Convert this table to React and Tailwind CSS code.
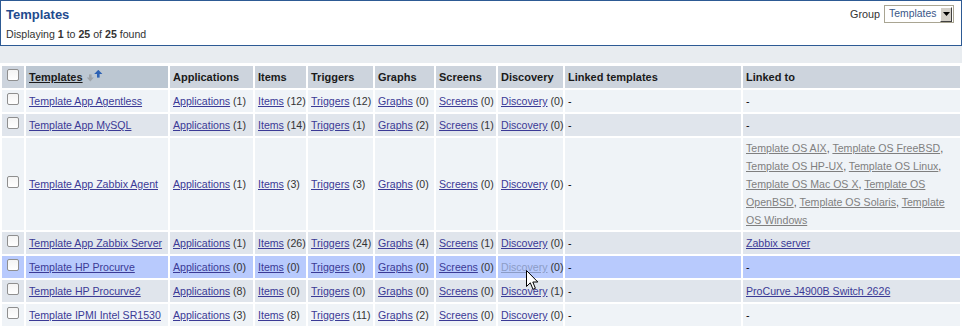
import React from "react";

const rows = [
  { name: "Template App Agentless", apps: 1, items: 12, triggers: 12, graphs: 0, screens: 0, disc: 0, linkedTo: null },
  { name: "Template App MySQL", apps: 1, items: 14, triggers: 1, graphs: 2, screens: 1, disc: 0, linkedTo: null },
  { name: "Template App Zabbix Agent", apps: 1, items: 3, triggers: 3, graphs: 0, screens: 0, disc: 0, linkedTo: "os" },
  { name: "Template App Zabbix Server", apps: 1, items: 26, triggers: 24, graphs: 4, screens: 1, disc: 0, linkedTo: "Zabbix server" },
  { name: "Template HP Procurve", apps: 0, items: 0, triggers: 0, graphs: 0, screens: 0, disc: 0, linkedTo: null, hover: true },
  { name: "Template HP Procurve2", apps: 8, items: 0, triggers: 0, graphs: 0, screens: 0, disc: 1, linkedTo: "ProCurve J4900B Switch 2626" },
  { name: "Template IPMI Intel SR1530", apps: 3, items: 8, triggers: 11, graphs: 2, screens: 0, disc: 0, linkedTo: null },
];

const Checkbox = () => (
  <div className="mb-[5px] ml-[5px] h-[12px] w-[12px] rounded-[2px] border border-[#8f8f8f] bg-gradient-to-b from-[#f4f4f4] to-white" />
);

const Link = ({ children, muted }) => (
  <a href="#" className={`underline ${muted ? "text-[#7f7f7f]" : "text-[#3b3a96]"}`}>
    {children}
  </a>
);

const Count = ({ label, n, faded }) => (
  <span className="whitespace-nowrap">
    <a href="#" className={`underline ${faded ? "text-[#8c9cc6]" : "text-[#3b3a96]"}`}>{label}</a> ({n})
  </span>
);

// gray "down" arrow next to a blue "up" arrow = sorted ascending
const SortIcon = () => (
  <svg width="16" height="12" viewBox="0 0 16 12" className="ml-[4px] mb-[3px] shrink-0 block">
    <rect x="2" y="4.4" width="2.6" height="3.8" fill="#9fa4a9" />
    <path d="M-0.2 7.6 L6.8 7.6 L3.3 11.4 Z" fill="#9fa4a9" />
    <path d="M7.2 4.1 L15.4 4.1 L11.3 -0.2 Z" fill="#2d62b4" />
    <rect x="10" y="3.6" width="2.6" height="4" fill="#2d62b4" />
  </svg>
);

const Cursor = () => (
  <svg width="13" height="21" viewBox="0 0 13 21" className="absolute left-[526px] top-[270px]">
    <path d="M0.5 0.5 L0.5 16.5 L4.3 12.8 L7 19.3 L9.4 18.3 L6.8 12 L11.8 12 Z" fill="white" stroke="black" strokeWidth="1" strokeLinejoin="round" />
  </svg>
);

export default function App() {
  const cell = "flex min-h-[22px] items-center pl-[3px] py-px leading-[18px]";
  return (
    <div className="relative w-[962px] h-[328px] overflow-hidden bg-white font-['Liberation_Sans',Arial,sans-serif] text-[10.6px] text-[#333]">
      {/* page header */}
      <div className="flex h-[46px] justify-between border border-[#2d5a94] bg-white pl-[5px] pr-[7px]">
        <div className="flex flex-col">
          <div className="mt-[5px] text-[13px] font-bold leading-[18px] text-[#1f4b8e]">Templates</div>
          <div className="mt-[3px] text-[10.6px] leading-[14px]">
            Displaying <b>1</b> to <b>25</b> of <b>25</b> found
          </div>
        </div>
        <div className="mt-[4px] flex h-[18px] items-center gap-[4px] text-[10.8px]">
          <span>Group</span>
          <div className="flex h-[18px] w-[70px] items-center justify-between border border-[#a9a592] bg-white pl-[4px] pr-px text-[10.4px]">
            <span className="text-[#3a5788]">Templates</span>
            <div className="flex h-[15px] w-[12px] items-center justify-center border border-r-[#404040] border-b-[#404040] border-t-white border-l-white bg-[#d4d0c8]">
              <svg width="7" height="4" viewBox="0 0 7 4">
                <path d="M0 0 L7 0 L3.5 4 Z" fill="black" />
              </svg>
            </div>
          </div>
        </div>
      </div>

      <div className="h-[17px] bg-[#e8ecf0]" />

      {/* table */}
      <div className="grid grid-cols-[22px_142px_83px_51px_65px_59px_60px_65px_176px_217px] gap-[2px] bg-white px-[2px] pt-[3px] pb-[2px]">
        <div className="flex h-[22px] items-center bg-[#cdd4dd]">
          <Checkbox />
        </div>
        <div className="flex h-[22px] items-center bg-[#bcc7d2] pl-[3px] text-[11px] font-bold text-[#1a1a1a]">
          <a href="#" className="underline">Templates</a>
          <SortIcon />
        </div>
        {["Applications", "Items", "Triggers", "Graphs", "Screens", "Discovery", "Linked templates", "Linked to"].map((h) => (
          <div key={h} className="flex h-[22px] items-center bg-[#cdd4dd] pl-[3px] text-[11px] font-bold text-[#1a1a1a]">
            {h}
          </div>
        ))}

        {rows.map((r, i) => {
          const bg = r.hover ? "bg-[#b8cafd]" : i % 2 === 0 ? "bg-[#eff3f7]" : "bg-[#e0e5ec]";
          return (
            <React.Fragment key={r.name}>
              <div className={`flex min-h-[22px] items-center ${bg}`}>
                <Checkbox />
              </div>
              <div className={`${cell} ${bg}`}>
                <Link>{r.name}</Link>
              </div>
              <div className={`${cell} ${bg}`}><Count label="Applications" n={r.apps} /></div>
              <div className={`${cell} ${bg}`}><Count label="Items" n={r.items} /></div>
              <div className={`${cell} ${bg}`}><Count label="Triggers" n={r.triggers} /></div>
              <div className={`${cell} ${bg}`}><Count label="Graphs" n={r.graphs} /></div>
              <div className={`${cell} ${bg}`}><Count label="Screens" n={r.screens} /></div>
              <div className={`${cell} ${bg}`}><Count label="Discovery" n={r.disc} faded={r.hover} /></div>
              <div className={`${cell} ${bg} text-black`}>-</div>
              <div className={`${cell} ${bg} text-black`}>
                {r.linkedTo === null && "-"}
                {r.linkedTo === "os" && (
                  <div className="text-[#555]">
                    <Link muted>Template OS AIX</Link>, <Link muted>Template OS FreeBSD</Link>,<br />
                    <Link muted>Template OS HP-UX</Link>, <Link muted>Template OS Linux</Link>,<br />
                    <Link muted>Template OS Mac OS X</Link>, <Link muted>Template OS<br />OpenBSD</Link>, <Link muted>Template OS Solaris</Link>, <Link muted>Template<br />OS Windows</Link>
                  </div>
                )}
                {r.linkedTo && r.linkedTo !== "os" && <Link>{r.linkedTo}</Link>}
              </div>
            </React.Fragment>
          );
        })}
      </div>

      <Cursor />
    </div>
  );
}
